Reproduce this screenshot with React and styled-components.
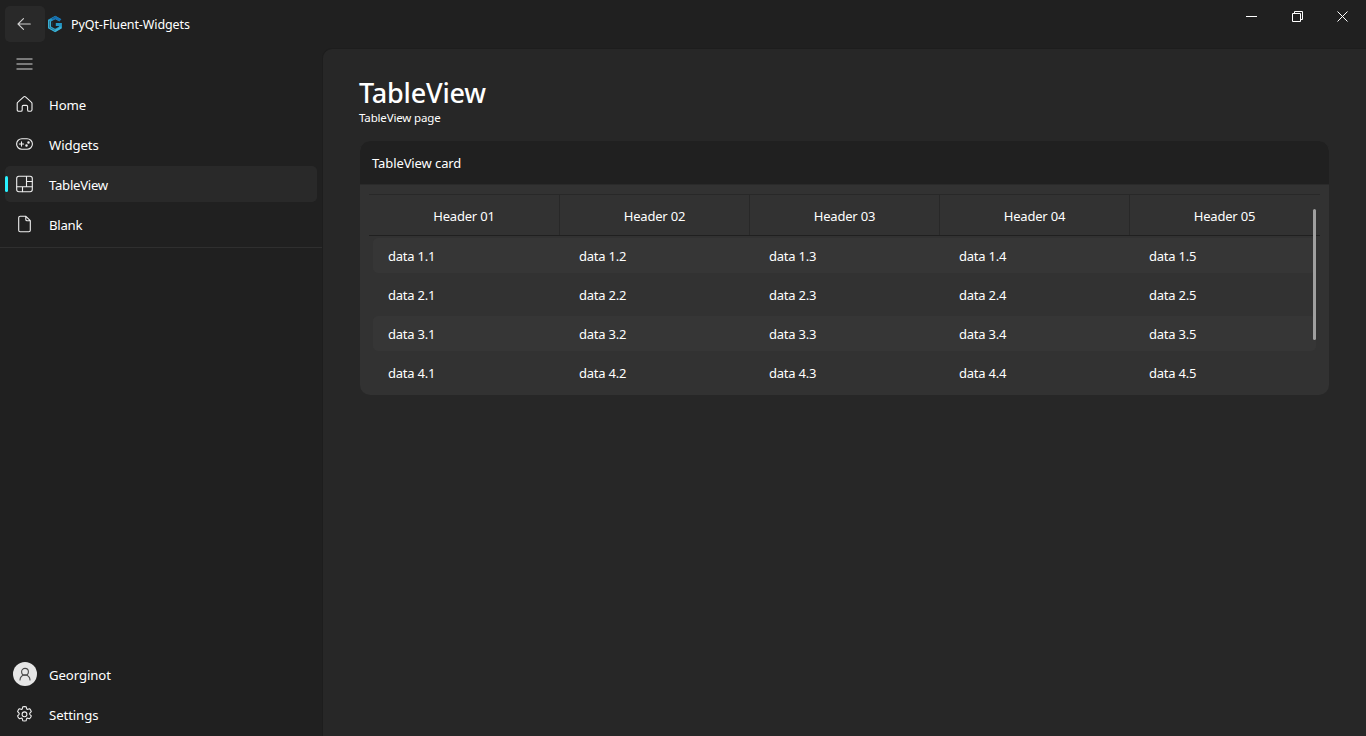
import React from "react";
import styled, { createGlobalStyle } from "styled-components";

const GlobalStyle = createGlobalStyle`
  * { box-sizing: border-box; }
  body {
    margin: 0;
    background: #202020;
    color: #fff;
    font: 13px/18px "Noto Sans", "Open Sans", sans-serif;
    overflow: hidden;
  }
  svg { display: block; flex: none; }
`;

const Window = styled.div`
  display: flex;
  flex-direction: column;
  width: 1366px;
  height: 736px;
  background: #202020;
`;

const TitleBar = styled.header`
  display: flex;
  align-items: center;
  height: 48px;
  flex: none;
  padding-left: 5px;
`;

const BackButton = styled.button`
  display: flex;
  align-items: center;
  justify-content: center;
  width: 40px;
  height: 36px;
  margin-right: 2px;
  padding: 0 2px 0 0;
  border: 0;
  border-radius: 5px;
  background: #292929;
`;

const AppTitle = styled.span`
  margin-left: 8px;
  padding-top: 2px;
  font-size: 12.5px;
  letter-spacing: -0.1px;
  white-space: nowrap;
`;

const WindowControls = styled.div`
  display: flex;
  align-self: flex-start;
  margin-left: auto;
`;

const ControlButton = styled.button`
  display: flex;
  align-items: center;
  justify-content: center;
  width: 46px;
  height: 32px;
  padding: ${(p) => (p.$edge ? "0 2px 0 0" : "0")};
  border: 0;
  background: transparent;
`;

const Main = styled.div`
  display: flex;
  flex: 1;
  min-height: 0;
`;

const Sidebar = styled.nav`
  display: flex;
  flex-direction: column;
  width: 322px;
  flex: none;
  padding-bottom: 4px;
`;

const MenuButton = styled.button`
  display: flex;
  align-items: center;
  width: 40px;
  height: 32px;
  margin: 0 5px 2px;
  padding: 0 0 0 11px;
  border: 0;
  background: transparent;
`;

const NavItem = styled.a`
  position: relative;
  display: flex;
  align-items: center;
  height: 36px;
  flex: none;
  margin: 4px 5px 0 5px;
  border-radius: 5px;
  background: ${(p) => (p.$active ? "#292929" : "transparent")};
`;

const ActiveMark = styled.span`
  position: absolute;
  left: 0;
  top: 10px;
  width: 3px;
  height: 16px;
  border-radius: 1.5px;
  background: #29f1ff;
`;

const NavIcon = styled.span`
  display: flex;
  justify-content: center;
  width: 39px;
  margin-right: 5px;
`;

const NavLabel = styled.span`
  padding-top: 2px;
  font-size: 13.2px;
  letter-spacing: ${(p) => p.$spacing || -0.1}px;
`;

const Divider = styled.div`
  height: 1px;
  margin-top: 5px;
  background: #2f2f2f;
`;

const Spacer = styled.div`
  flex: 1;
`;

const Avatar = styled.span`
  display: flex;
  align-items: center;
  justify-content: center;
  width: 24px;
  height: 24px;
  margin-left: 1px;
  border-radius: 50%;
  background: #e6e6e6;
`;

const Page = styled.main`
  flex: 1;
  border: 1px solid #1d1d1d;
  border-width: 1px 0 0 1px;
  border-top-left-radius: 10px;
  background: #272727;
  padding: 27px 37px 0 37px;
`;

const PageTitle = styled.h1`
  margin: 0 0 0 -1px;
  font-size: 27px;
  font-weight: 500;
  line-height: 34px;
  letter-spacing: -0.2px;
`;

const PageSubtitle = styled.p`
  margin: 0 0 0 -1px;
  font-size: 11.5px;
  line-height: 15px;
  letter-spacing: -0.15px;
`;

const Card = styled.section`
  width: 969px;
  height: 254px;
  margin-top: 16px;
  border-radius: 10px;
  overflow: hidden;
  background: #323232;
`;

const CardHeader = styled.div`
  height: 44px;
  padding: 13px 12px;
  background: #202020;
  border-bottom: 1px solid #2a2a2a;
  letter-spacing: -0.1px;
`;

const TableArea = styled.div`
  position: relative;
  margin: 9px 9px 0;
`;

const HeaderRow = styled.div`
  display: grid;
  grid-template-columns: 191px repeat(4, 190px);
  height: 42px;
  border-top: 1px solid #282828;
  border-bottom: 1px solid #202020;
`;

const HeaderCell = styled.div`
  padding-top: 12px;
  text-align: center;
  letter-spacing: -0.18px;
  border-right: 1px solid #282828;
  &:last-child { border-right-color: transparent; }
`;

const DataRow = styled.div`
  display: grid;
  grid-template-columns: 191px repeat(4, 190px);
  width: 943px;
  height: 35px;
  margin: ${(p) => (p.$first ? "2px" : "4px")} 0 0 4px;
  padding: 9px 0 0 15px;
  border-radius: 5px;
  background: ${(p) => (p.$striped ? "#363636" : "transparent")};
`;

const Cell = styled.span`
  white-space: nowrap;
  letter-spacing: -0.22px;
`;

const ScrollThumb = styled.div`
  position: absolute;
  top: 15px;
  right: 4px;
  width: 3px;
  height: 131px;
  border-radius: 1.5px;
  background: #9f9f9f;
`;

const Icon = ({ children }) => (
  <svg width="17" height="18" viewBox="0.5 0 17 18" fill="none" stroke="#f0f0f0"
    strokeWidth="1.1" strokeLinecap="round" strokeLinejoin="round">{children}</svg>
);

const BackIcon = () => (
  <svg width="18" height="18" viewBox="0 0 18 18" fill="none" stroke="#d0d0d0"
    strokeWidth="1.1" strokeLinecap="round" strokeLinejoin="round">
    <path d="M15.3 9H3M8.5 3.6 3 9l5.5 5.4" />
  </svg>
);

const Logo = () => (
  <svg width="16" height="18" viewBox="0 0 16 18">
    <path d="M13.2 5.2 8.3 2.4 2.5 5.7v6.6l5.6 3.2 5.3-3V9.4H8.8" fill="none" stroke="#2498c6" strokeWidth="3" />
    <path d="M1.2 5v8l7 4 6.1-3.5v-2.2l-6.1 3.4-4.4-2.5V6.4z" fill="#3fb3d3" />
    <path d="m8.2 1 6.3 3.6-2.3 1.5-3.9-2.2-2.2 1.2-2.3-1.4z" fill="#1670b5" />
    <path d="M2.5 6v6.4l5.8 3.2M5 3.8l3.6-1.9M5.2 7.2v3.6" fill="none" stroke="#185875" strokeWidth=".6" />
  </svg>
);

const HomeIcon = () => (
  <Icon><path d="M10 1.9 15.8 7.1q.7.6.7 1.4v6.2q0 1.6-1.6 1.6h-1.5q-1.3 0-1.3-1.3v-3.4q0-1.2-1.2-1.2H7.9q-1.2 0-1.2 1.2V15q0 1.3-1.3 1.3H3.3q-1.6 0-1.6-1.6V8.5q0-.8.7-1.4L8.2 1.9q.9-.8 1.8 0z" /></Icon>
);

const GameIcon = () => (
  <Icon>
    <rect x="1.1" y="3.7" width="15.8" height="10.6" rx="5.3" />
    <path d="M6 6.9v4.2M3.9 9h4.2" />
    <circle cx="13" cy="7.4" r=".7" fill="#f0f0f0" /><circle cx="11" cy="10.6" r=".7" fill="#f0f0f0" />
  </Icon>
);

const LayoutIcon = () => (
  <Icon>
    <rect x="1.2" y="1.2" width="15.6" height="15.6" rx="2.2" />
    <path d="M11 1.5v10.2M1.5 11.7h15M11 6.5h5.6M7 11.7v4.9" />
  </Icon>
);

const DocumentIcon = () => (
  <Icon>
    <path d="M10.4 1.3H4.7q-1.5 0-1.5 1.5v12.4q0 1.5 1.5 1.5h8.6q1.5 0 1.5-1.5V5.7zM10.3 1.5v3q0 1.3 1.3 1.3h3" />
  </Icon>
);

const PersonIcon = () => (
  <svg width="16" height="16" viewBox="0 0 16 16" fill="none" stroke="#484848"
    strokeWidth="1.1" strokeLinecap="round">
    <circle cx="8" cy="5.8" r="3.4" /><path d="M3 13.9a5 5 0 0 1 10 0" />
  </svg>
);

const SettingsIcon = () => (
  <Icon>
    <circle cx="9" cy="9.3" r="2.4" />
    <path transform="translate(0 .3)" d="M7.3 1.5q1.7-.4 3.4 0l.4 1.7q.3 1 1.3.8l1.7-.6q1.2 1.3 1.7 2.9l-1.3 1.3q-.7.8 0 1.7l1.3 1.2q-.5 1.7-1.7 2.9l-1.7-.5q-1.1-.2-1.4.8l-.4 1.8q-1.6.3-3.3 0l-.4-1.8q-.3-1-1.4-.8l-1.7.5q-1.2-1.2-1.7-2.9l1.3-1.2q.7-.9 0-1.7L2.1 6.3q.5-1.6 1.7-2.9l1.7.6q1.1.2 1.4-.8z" />
  </Icon>
);

const navItems = [
  { label: "Home", icon: HomeIcon },
  { label: "Widgets", icon: GameIcon },
  { label: "TableView", icon: LayoutIcon, active: true, spacing: -0.28 },
  { label: "Blank", icon: DocumentIcon, spacing: -0.25 },
];

const columns = [1, 2, 3, 4, 5];
const rows = [1, 2, 3, 4];

export default function App() {
  return (
    <Window>
      <GlobalStyle />
      <TitleBar>
        <BackButton aria-label="Back"><BackIcon /></BackButton>
        <Logo />
        <AppTitle>PyQt-Fluent-Widgets</AppTitle>
        <WindowControls>
          <ControlButton aria-label="Minimize">
            <svg width="11" height="11"><path d="M0 5.5h11" stroke="#fff" /></svg>
          </ControlButton>
          <ControlButton aria-label="Restore">
            <svg width="11" height="11" fill="none" stroke="#fff"><path d="M.5 2.5h8v8h-8zM2.5 2.5v-2h8v8h-2" /></svg>
          </ControlButton>
          <ControlButton aria-label="Close" $edge>
            <svg width="11" height="11"><path d="m.5.5 10 10m0-10-10 10" stroke="#fff" /></svg>
          </ControlButton>
        </WindowControls>
      </TitleBar>
      <Main>
        <Sidebar>
          <MenuButton aria-label="Menu">
            <svg width="17" height="12"><path d="M.5 1h16M.5 6h16M.5 11h16" stroke="#989898" strokeWidth="1.6" /></svg>
          </MenuButton>
          {navItems.map(({ label, icon: Glyph, active, spacing }) => (
            <NavItem key={label} $active={active}>
              {active && <ActiveMark />}
              <NavIcon><Glyph /></NavIcon>
              <NavLabel $spacing={spacing}>{label}</NavLabel>
            </NavItem>
          ))}
          <Divider />
          <Spacer />
          <NavItem>
            <NavIcon><Avatar><PersonIcon /></Avatar></NavIcon>
            <NavLabel>Georginot</NavLabel>
          </NavItem>
          <NavItem>
            <NavIcon><SettingsIcon /></NavIcon>
            <NavLabel>Settings</NavLabel>
          </NavItem>
        </Sidebar>
        <Page>
          <PageTitle>TableView</PageTitle>
          <PageSubtitle>TableView page</PageSubtitle>
          <Card>
            <CardHeader>TableView card</CardHeader>
            <TableArea>
              <HeaderRow>
                {columns.map((c) => <HeaderCell key={c}>Header 0{c}</HeaderCell>)}
              </HeaderRow>
              {rows.map((r) => (
                <DataRow key={r} $first={r === 1} $striped={r % 2 === 1}>
                  {columns.map((c) => <Cell key={c}>data {r}.{c}</Cell>)}
                </DataRow>
              ))}
              <ScrollThumb />
            </TableArea>
          </Card>
        </Page>
      </Main>
    </Window>
  );
}
